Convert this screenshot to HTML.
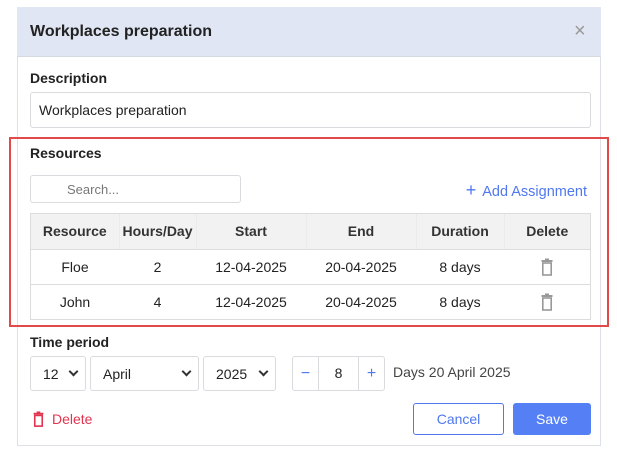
<!DOCTYPE html>
<html><head><style>
*{box-sizing:border-box;margin:0;padding:0}
body{width:617px;height:450px;background:#fff;font-family:"Liberation Sans",sans-serif;color:#222;position:relative;overflow:hidden;font-size:14px}
.a{position:absolute}
.modal{left:17px;top:7px;width:584px;height:439px;border:1px solid #dde0e6;background:#fff}
.hdr{left:17px;top:7px;width:584px;height:50px;background:#e0e6f3;border-bottom:1px solid #d5d9e0}
.lbl{font-weight:bold;font-size:14px;color:#222}
.box{border:1px solid #d9dbde;border-radius:3px;background:#fff}
table{border-collapse:collapse;font-size:14px}
td,th{text-align:center;height:35px;border-bottom:1px solid #dcdcdc}
th{background:#f2f2f2;font-weight:bold;color:#333;border-right:1px solid #ebebeb}
td svg{vertical-align:middle}
.sel{display:flex;align-items:center;justify-content:space-between;padding:0 8px 0 12px;font-size:14px}
.chev{width:7px;height:7px;border-right:2px solid #333;border-bottom:2px solid #333;transform:rotate(45deg);margin-top:-4px}
</style></head><body>
<div class="a modal"></div>
<div class="a hdr"></div>
<div class="a" style="left:30px;top:23px;font-size:16px;font-weight:bold;color:#222">Workplaces preparation</div>
<div class="a" style="left:574px;top:20px;font-size:20px;color:#999">×</div>
<div class="a lbl" style="left:30px;top:70px">Description</div>
<div class="a box" style="left:30px;top:92px;width:561px;height:36px;padding:9px 8px;font-size:14px">Workplaces preparation</div>
<div class="a" style="left:9px;top:137px;width:600px;height:190px;border:2px solid #e24a4a"></div>
<div class="a lbl" style="left:30px;top:145px">Resources</div>
<div class="a box" style="left:30px;top:175px;width:211px;height:28px;padding:6px 0 0 36px;color:#777;font-size:13px">Search...</div>
<div class="a" style="right:30px;top:180px;font-size:14.5px;color:#4f78f0"><span style="font-size:18px;margin-right:6px">+</span>Add Assignment</div>
<div class="a" style="left:30px;top:213px;width:561px;border:1px solid #dcdcdc">
<table style="width:559px">
<tr><th style="width:88px">Resource</th><th style="width:77px">Hours/Day</th><th style="width:110px">Start</th><th style="width:110px">End</th><th style="width:88px">Duration</th><th style="border-right:0">Delete</th></tr>
<tr><td>Floe</td><td>2</td><td>12-04-2025</td><td>20-04-2025</td><td>8 days</td><td><svg width="12" height="18" viewBox="0 0 12 18"><rect x="0.5" y="2" width="11" height="2" fill="#999"/><rect x="4" y="0.5" width="4" height="2" fill="#999"/><rect x="1.8" y="5" width="8.4" height="12" fill="none" stroke="#999" stroke-width="1.6"/></svg></td></tr>
<tr><td style="border:0">John</td><td style="border:0">4</td><td style="border:0">12-04-2025</td><td style="border:0">20-04-2025</td><td style="border:0">8 days</td><td style="border:0"><svg width="12" height="18" viewBox="0 0 12 18"><rect x="0.5" y="2" width="11" height="2" fill="#999"/><rect x="4" y="0.5" width="4" height="2" fill="#999"/><rect x="1.8" y="5" width="8.4" height="12" fill="none" stroke="#999" stroke-width="1.6"/></svg></td></tr>
</table></div>
<div class="a lbl" style="left:30px;top:334px">Time period</div>
<div class="a box sel" style="left:30px;top:356px;width:56px;height:35px">12<span class="chev"></span></div>
<div class="a box sel" style="left:90px;top:356px;width:109px;height:35px">April<span class="chev"></span></div>
<div class="a box sel" style="left:203px;top:356px;width:73px;height:35px">2025<span class="chev"></span></div>
<div class="a box" style="left:292px;top:356px;width:93px;height:35px;display:flex">
<div style="width:26px;border-right:1px solid #d9dbde;color:#4f78f0;text-align:center;line-height:33px;font-size:16px">−</div>
<div style="width:40px;border-right:1px solid #d9dbde;text-align:center;line-height:33px">8</div>
<div style="flex:1;color:#4f78f0;text-align:center;line-height:33px;font-size:16px">+</div></div>
<div class="a" style="left:393px;top:364px;color:#444">Days 20 April 2025</div>
<div class="a" style="left:33px;top:411px;color:#e0344f;display:flex;align-items:center"><svg width="11" height="16" viewBox="0 0 12 18" style="margin-right:8px"><rect x="0.5" y="2" width="11" height="2" fill="#e0344f"/><rect x="4" y="0.5" width="4" height="2" fill="#e0344f"/><rect x="1.8" y="5" width="8.4" height="12" fill="none" stroke="#e0344f" stroke-width="1.8"/></svg>Delete</div>
<div class="a" style="left:413px;top:403px;width:91px;height:32px;border:1px solid #4f78f0;border-radius:3px;color:#4f78f0;text-align:center;line-height:30px">Cancel</div>
<div class="a" style="left:513px;top:403px;width:78px;height:32px;background:#5580f5;border-radius:3px;color:#fff;text-align:center;line-height:32px">Save</div>
</body></html>
